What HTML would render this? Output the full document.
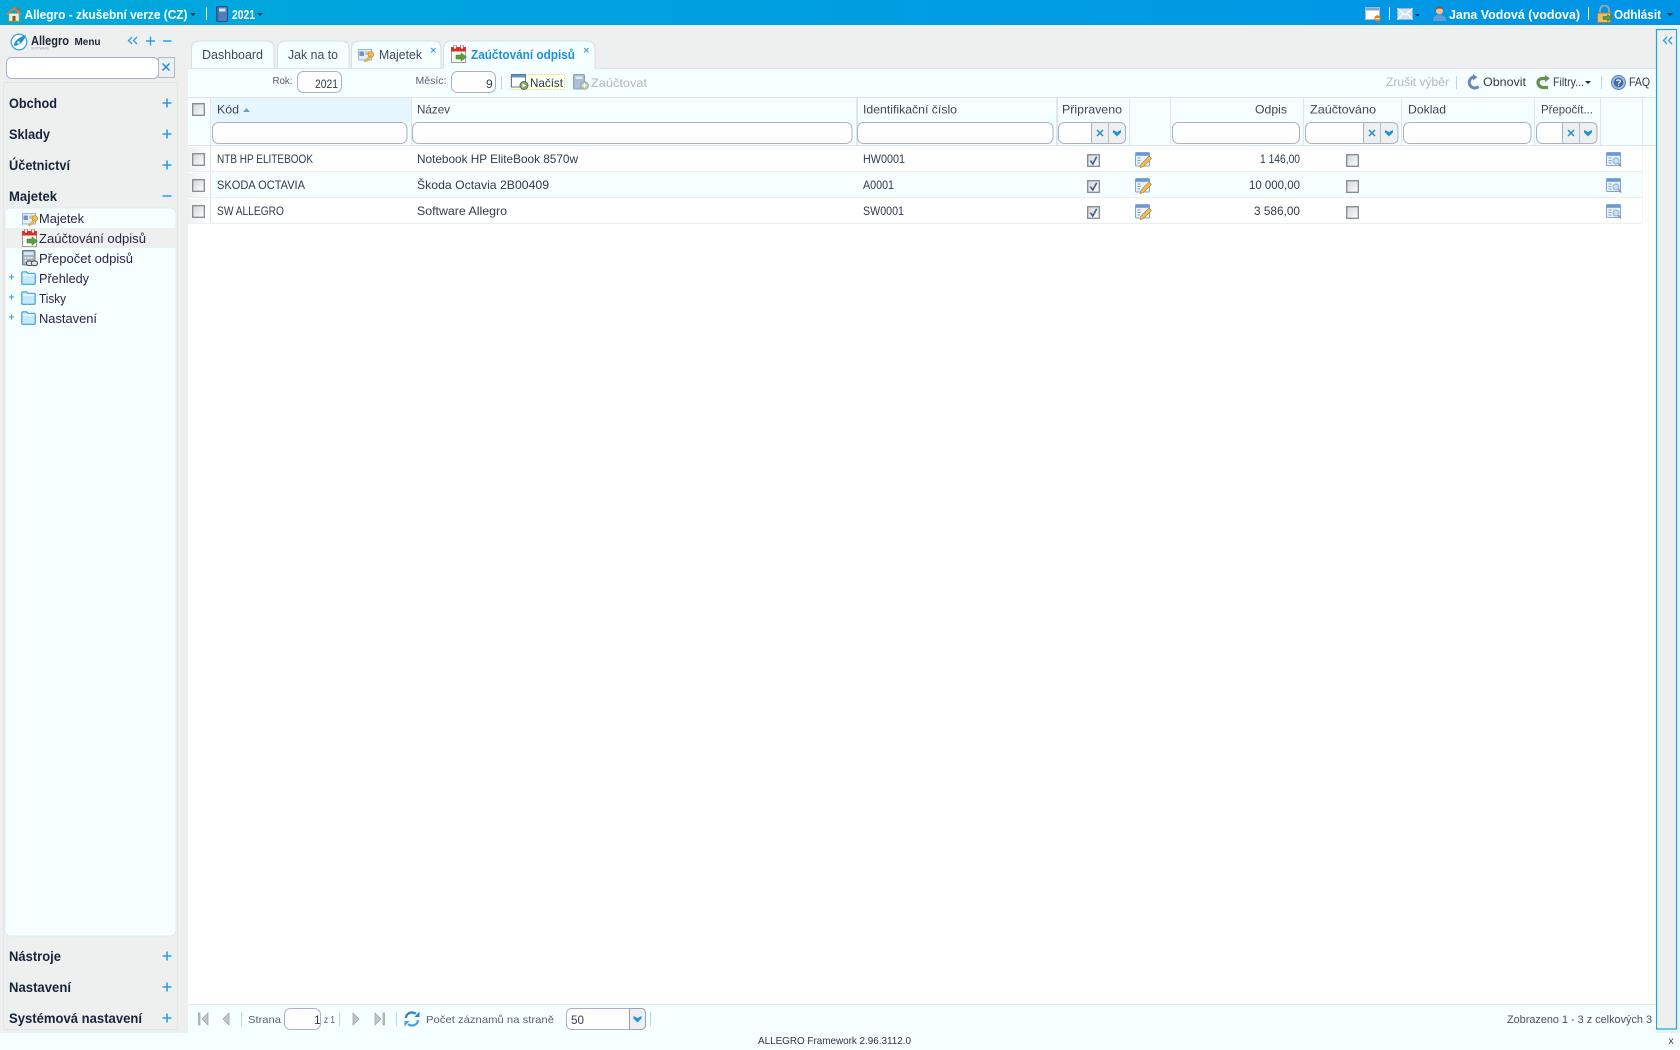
<!DOCTYPE html>
<html lang="cs"><head><meta charset="utf-8"><title>Allegro – Zaúčtování odpisů</title>
<style>
html,body{margin:0;padding:0;width:1680px;height:1050px;overflow:hidden;background:#f6ffff}
svg{display:block}
text{font-family:"Liberation Sans","DejaVu Sans",sans-serif;font-size:12px;fill:#33384a;white-space:pre}
.top{font-size:13px;font-weight:700;fill:#fff}
.sec{font-size:13.5px;font-weight:700;fill:#17233a}
.mi{font-size:12.5px;fill:#2b2348}
.tab{font-size:12.5px;fill:#3d4a5c}
.cell{font-size:12px;fill:#33384a}
.hd{font-size:12px;fill:#3f4656}
.sm{font-size:10.5px;fill:#5a5f70}
.off{font-size:11.5px;fill:#b4b7bd}
.c{shape-rendering:crispEdges}
.in{fill:#fff;stroke:#aab1c6;stroke-width:1}
.blue{stroke:#2f9be6;stroke-width:1.6;fill:none}
</style></head><body>
<svg width="1680" height="1050" viewBox="0 0 1680 1050" xmlns="http://www.w3.org/2000/svg">
<defs>
<linearGradient id="bar" x1="0" x2="1" y1="0" y2="0"><stop offset="0" stop-color="#00a9dc"/><stop offset="1" stop-color="#0094e6"/></linearGradient>
<linearGradient id="lc" x1="0" x2="1" y1="0" y2="0"><stop offset="0" stop-color="#eef0f0"/><stop offset="1" stop-color="#fdfefe"/></linearGradient>
<linearGradient id="cb" x1="0" x2="1" y1="0" y2="1"><stop offset="0" stop-color="#d2d4d6"/><stop offset="1" stop-color="#fff"/></linearGradient>
<symbol id="cbox" viewBox="0 0 13 13"><rect x=".7" y=".7" width="11.6" height="11.6" fill="url(#cb)" stroke="#85888c" stroke-width="1.3"/></symbol>
<symbol id="cbok" viewBox="0 0 13 13"><rect x=".7" y=".7" width="11.6" height="11.6" fill="url(#cb)" stroke="#85888c" stroke-width="1.3"/><path d="M3.400 6.600 5.800 10 9.700 2.800" fill="none" stroke="#3e5c94" stroke-width="1.600"/></symbol>
<symbol id="home" viewBox="0 0 16 16"><path d="M0 14.500h16V16H0z" fill="#5da03c"/><path d="M3 7.500h10V15H3z" fill="#f6e9d2" stroke="#c3a77c" stroke-width=".6"/><path d="M6.500 10h3v5h-3z" fill="#7a5a38"/><path d="M0 8.200 8 .8l8 7.400-1.200 1.200L8 3.400 1.200 9.400z" fill="#dc7a3c"/><path d="M11.200 1.500h2v3.800l-2-1.800z" fill="#b5612d"/></symbol>
<symbol id="book" viewBox="0 0 12 16"><rect x=".5" y=".5" width="11" height="15" rx="1" fill="#4d7fbd" stroke="#27528c"/><rect x="3" y="2.500" width="6.500" height="3" fill="#d8e8f6"/><rect x="1.500" y="1" width="1" height="14" fill="#2a5996"/></symbol>
<symbol id="win" viewBox="0 0 16 16"><rect x=".5" y="1.500" width="14" height="12" fill="#fff" stroke="#a9bdd2"/><rect x="1" y="2" width="13" height="2.500" fill="#7da7d4"/><circle cx="12.500" cy="12.500" r="3.200" fill="#e07b2e"/><rect x="10.500" y="12" width="4" height="1.200" fill="#fff"/></symbol>
<symbol id="mail" viewBox="0 0 16 12"><rect x=".5" y=".5" width="15" height="11" fill="#cfe4f8" stroke="#8fb6de"/><path d="M.5 .5 8 7l7.500-6.500M.5 11.500 6 5.500M15.500 11.500 10 5.500" fill="none" stroke="#fff" stroke-width="1"/></symbol>
<symbol id="user" viewBox="0 0 16 16"><path d="M1 16c0-5 3-6.500 7-6.500s7 1.500 7 6.500z" fill="#5f9dd8"/><circle cx="8" cy="5" r="3.800" fill="#f0c09a"/><path d="M4 5c-.4-3 1.500-4.500 4-4.500S12.400 2 12 5c-1-2-2-2.300-4-2.300S5 3 4 5z" fill="#96502c"/></symbol>
<symbol id="lock" viewBox="0 0 16 18"><path d="M3.500 8V5a4.500 4.500 0 0 1 9 0v3" fill="none" stroke="#a5a5a5" stroke-width="1.800"/><rect x="1" y="8" width="13" height="9.500" rx="1" fill="#e9bf62" stroke="#a87f2e"/><path d="M6.500 11.500h4.500v-2l4.500 3.500-4.500 3.500v-2H6.500z" fill="#5e9a44" stroke="#3f7530" stroke-width=".5"/></symbol>
<symbol id="maj" viewBox="0 0 16 13"><rect x=".5" y=".5" width="13" height="10.500" fill="#e4edf7" stroke="#9ab4d2"/><rect x="1.500" y="2.500" width="4.500" height="4.500" fill="#6f94c4"/><rect x="7" y="2.500" width="5.500" height="3.500" fill="#d8c49a"/><circle cx="12.800" cy="5.500" r="2.800" fill="#f2bd45" stroke="#b5842a" stroke-width=".6"/><path d="M11.300 7.300 6 12.300l1.600.5 1-1 .9.300 3.300-3.800z" fill="#f2bd45" stroke="#b5842a" stroke-width=".5"/></symbol>
<symbol id="cal" viewBox="0 0 16 18"><rect x=".5" y="2.500" width="14" height="15" fill="#fbfbf6" stroke="#9a9ea4"/><rect x="0" y="2" width="15" height="4.500" fill="#d9302a"/><rect x="2.500" y="0" width="3" height="4" rx="1" fill="#f2f2f2" stroke="#8d1e1a" stroke-width=".5"/><rect x="9.500" y="0" width="3" height="4" rx="1" fill="#f2f2f2" stroke="#8d1e1a" stroke-width=".5"/><path d="M5 10h5V7.800l5.500 4.200-5.500 4.200V14H5z" fill="#5da044" stroke="#3c7a2a" stroke-width=".5"/></symbol>
<symbol id="calc" viewBox="0 0 16 16"><rect x=".5" y=".5" width="12.500" height="14.500" rx="1" fill="#aab4c0" stroke="#6c7783"/><rect x="2" y="2" width="9.500" height="3" fill="#cfe4f4"/><path d="M2.500 7h2v1.500h-2zM5.500 7h2v1.500h-2zM8.500 7h2v1.500h-2zM2.500 10h2v1.500h-2z" fill="#eef2f5"/><rect x="4.500" y="11" width="6" height="4.500" rx="2.200" fill="#e4e7ea" stroke="#3f4650"/><rect x="9.500" y="11" width="6" height="4.500" rx="2.200" fill="#e4e7ea" stroke="#3f4650"/></symbol>
<symbol id="fold" viewBox="0 0 15 14"><path d="M.8 12.200V2c0-.7.4-1.200 1.200-1.200h3.600L7 2.300h5.800c.9 0 1.400.5 1.400 1.300v8.600c0 .7-.5 1.100-1.300 1.100H2c-.8 0-1.200-.4-1.200-1.100z" fill="#c6e8fb" stroke="#3ea2dc" stroke-width="1.200"/><rect x="1.500" y="3.300" width="12" height="1.500" fill="#eefaff"/></symbol>
<symbol id="edit" viewBox="0 0 17 16"><rect x=".5" y=".5" width="14" height="13.500" rx="1" fill="#eaf2fb" stroke="#7ea6d6"/><rect x="1" y="1" width="13" height="2.800" fill="#6b9ad3"/><path d="M2.500 6h3M2.500 8.500h3M2.500 11h2.500" stroke="#7da2cf"/><path d="M14 4 16.500 6.500 8.500 14.500l-3.400 1 .9-3.400z" fill="#f4bb4c" stroke="#b0802a" stroke-width=".6"/></symbol>
<symbol id="view" viewBox="0 0 16 16"><rect x=".5" y=".5" width="14" height="13" rx="1" fill="#eaf2fb" stroke="#7ea6d6"/><rect x="1" y="1" width="13" height="2.800" fill="#6b9ad3"/><path d="M2.500 6h3M2.500 8.500h3M2.500 11h3" stroke="#7da2cf"/><circle cx="10" cy="9" r="3" fill="#c8dff3" stroke="#8eb0d6"/><path d="M12.500 11.500 15 14.500" stroke="#bd8a55" stroke-width="1.500"/></symbol>
<symbol id="load" viewBox="0 0 18 16"><rect x=".5" y=".5" width="14" height="12.500" fill="#fff" stroke="#5578ad"/><rect x="1" y="1" width="13" height="2.500" fill="#6a90c4"/><circle cx="13" cy="11.500" r="4" fill="#8ea37a" stroke="#58703f"/><path d="M11.500 9.500 15 11.500 11.500 13.500z" fill="#fff"/></symbol>
<symbol id="post" viewBox="0 0 16 16"><rect x=".5" y=".5" width="11" height="14.500" rx="1" fill="#a9bfd8" stroke="#8aa3c0"/><rect x="2.500" y="2.500" width="7" height="2.500" fill="#e2ebf3"/><circle cx="11.500" cy="11.500" r="3.800" fill="#c3cfb8" stroke="#98a68b"/><path d="M9.500 11.500h4M11.500 9.500v4" stroke="#fff"/></symbol>
<symbol id="ref" viewBox="0 0 13 16"><path d="M11.500 12.500A5.500 5.500 0 1 1 7 3" fill="none" stroke="#6c88b6" stroke-width="3"/><path d="M6 0v6.500l4.500-3.200z" fill="#6c88b6"/></symbol>
<symbol id="filt" viewBox="0 0 16 15"><path d="M13 12.500H8.500C5 12.500 3 10 3 7.500S5 3.500 8 3.500h2" fill="none" stroke="#63904d" stroke-width="3.200"/><path d="M10 0v7l5-3.500z" fill="#63904d"/></symbol>
<symbol id="faq" viewBox="0 0 15 15"><circle cx="7.500" cy="7.500" r="7" fill="#a5bddf" stroke="#5b7eb2"/><circle cx="7.500" cy="7.500" r="4.800" fill="#3d6cae"/><path d="M5.600 6c.2-1.500 3.800-1.500 3.800.3 0 1.200-1.900 1.200-1.900 2.500" fill="none" stroke="#fff" stroke-width="1.200"/><rect x="6.900" y="9.700" width="1.200" height="1.200" fill="#fff"/></symbol>
<symbol id="sync" viewBox="0 0 16 18"><path d="M2 8c0-3.500 3-5.500 6-5.500 1.500 0 2.800.4 3.800 1.500" fill="none" stroke="#2e7fc8" stroke-width="2.200"/><path d="M10.500 7h5V1.500z" fill="#2e7fc8"/><path d="M14 10c0 3.500-3 5.500-6 5.500-1.500 0-2.800-.4-3.800-1.500" fill="none" stroke="#4aa0dc" stroke-width="2.200"/><path d="M5.500 11h-5v5.500z" fill="#4aa0dc"/></symbol>
</defs>

<!-- page backgrounds -->
<rect width="1680" height="1050" fill="#f6ffff"/>
<rect width="1680" height="1033" y="0" fill="#eef0f0"/>
<rect x="188" y="68" width="1468" height="982" fill="#fff"/>
<rect x="0" y="1033" width="188" height="17" fill="#f6ffff"/>
<rect x="1656" y="1033" width="24" height="17" fill="#f6ffff"/>

<!-- top bar -->
<rect width="1680" height="25" fill="url(#bar)"/>
<use href="#home" x="6" y="6" width="16" height="16"/>
<text class="top" x="24.500" y="19" textLength="163" lengthAdjust="spacingAndGlyphs">Allegro - zkušební verze (CZ)</text>
<path d="M190 13h6l-3 3z" fill="#24384d"/>
<rect class="c" x="206" y="7" width="1" height="13" fill="#e6f6fd"/>
<use href="#book" x="216" y="6" width="12" height="16"/>
<text class="top" x="232" y="19" textLength="23" lengthAdjust="spacingAndGlyphs">2021</text>
<path d="M257 13h6l-3 3z" fill="#24384d"/>
<use href="#win" x="1365" y="6" width="16" height="16"/>
<rect class="c" x="1389" y="7" width="1" height="13" fill="#e6f6fd"/>
<use href="#mail" x="1397" y="8" width="16" height="12"/>
<path d="M1415 14h5l-2.500 2.500z" fill="#24384d"/>
<use href="#user" x="1432" y="6" width="15" height="15"/>
<text class="top" x="1449" y="19" textLength="131" lengthAdjust="spacingAndGlyphs">Jana Vodová (vodova)</text>
<rect class="c" x="1588" y="7" width="1" height="13" fill="#e6f6fd"/>
<use href="#lock" x="1596" y="5" width="17" height="18"/>
<text class="top" x="1614" y="19" textLength="47" lengthAdjust="spacingAndGlyphs">Odhlásit</text>
<path d="M1667 13h6l-3 3z" fill="#24384d"/>

<!-- sidebar head -->
<circle cx="19" cy="42" r="7.800" fill="#fff" stroke="#3ba6dd" stroke-width="1.300"/>
<path d="M13.500 46c.5-4 4-8.500 12.500-11-2 6-5.500 10.500-12.500 11z" fill="#1f93d6"/>
<circle cx="18.500" cy="42.500" r="1.300" fill="#fff"/>
<text x="31" y="45" style="font-size:13px;font-weight:700;fill:#1b2536" textLength="38" lengthAdjust="spacingAndGlyphs">Allegro</text>
<text x="74.500" y="45" style="font-size:10px;font-weight:700;fill:#1b2536" textLength="26" lengthAdjust="spacingAndGlyphs">Menu</text>
<text x="31" y="49.500" style="font-size:3.500px;fill:#a0a6ad" textLength="18" lengthAdjust="spacingAndGlyphs">SOFTWARE</text>
<path d="M132 37l-3.500 3.500 3.500 3.500M137 37l-3.500 3.500 3.500 3.500" class="blue" style="stroke-width:1.300"/>
<path d="M146 41h9M150.500 36.500v9M163 41h8.500" class="blue" style="stroke-width:1.400"/>
<rect class="in" x="6.500" y="57.500" width="152" height="21" rx="5"/>
<rect x="158.500" y="57.500" width="16" height="20" fill="#eef0f0" stroke="#b2b8c4"/>
<path d="M162.500 63.500l7 7M169.500 63.500l-7 7" stroke="#1f8ed8" stroke-width="1.500"/>

<!-- sidebar sections -->
<rect class="c" x="3" y="82" width="175" height="1" fill="#e2e5e5"/>
<rect class="c" x="3" y="82" width="1" height="948" fill="#e4e7e7"/>
<rect class="c" x="177" y="82" width="1" height="948" fill="#e4e7e7"/>
<rect class="c" x="3" y="1029" width="175" height="1" fill="#e2e5e5"/>
<text class="sec" x="9" y="108" textLength="48" lengthAdjust="spacingAndGlyphs">Obchod</text>
<text class="sec" x="9" y="139" textLength="41" lengthAdjust="spacingAndGlyphs">Sklady</text>
<text class="sec" x="9" y="170" textLength="61" lengthAdjust="spacingAndGlyphs">Účetnictví</text>
<text class="sec" x="9" y="201" textLength="48" lengthAdjust="spacingAndGlyphs">Majetek</text>
<path d="M162.500 103h9M167 98.500v9M162.500 134h9M167 129.500v9M162.500 165h9M167 160.500v9M162.500 196h9" class="blue"/>
<rect x="5" y="208" width="171" height="728" rx="6" fill="#f6ffff" stroke="#e6eaea"/>
<rect class="c" x="5" y="228" width="171" height="20" fill="#eef0f0"/>
<use href="#maj" x="22" y="213" width="16" height="13"/>
<text class="mi" x="39" y="223" textLength="45" lengthAdjust="spacingAndGlyphs">Majetek</text>
<use href="#cal" x="22" y="229" width="16" height="18"/>
<text class="mi" x="39" y="243" textLength="107" lengthAdjust="spacingAndGlyphs">Zaúčtování odpisů</text>
<use href="#calc" x="22" y="250" width="16" height="16"/>
<text class="mi" x="39" y="263" textLength="94" lengthAdjust="spacingAndGlyphs">Přepočet odpisů</text>
<use href="#fold" x="21" y="271" width="15" height="14"/>
<text class="mi" x="39" y="283" textLength="50" lengthAdjust="spacingAndGlyphs">Přehledy</text>
<use href="#fold" x="21" y="291" width="15" height="14"/>
<text class="mi" x="39" y="303" textLength="27" lengthAdjust="spacingAndGlyphs">Tisky</text>
<use href="#fold" x="21" y="311" width="15" height="14"/>
<text class="mi" x="39" y="323" textLength="58" lengthAdjust="spacingAndGlyphs">Nastavení</text>
<path d="M9 277h5M11.500 274.500v5M9 297h5M11.500 294.500v5M9 317h5M11.500 314.500v5" stroke="#2f9be6" stroke-width="1"/>
<text class="sec" x="9" y="961" textLength="52" lengthAdjust="spacingAndGlyphs">Nástroje</text>
<text class="sec" x="9" y="992" textLength="62" lengthAdjust="spacingAndGlyphs">Nastavení</text>
<text class="sec" x="9" y="1023" textLength="133" lengthAdjust="spacingAndGlyphs">Systémová nastavení</text>
<path d="M162.500 956h9M167 951.500v9M162.500 987h9M167 982.500v9M162.500 1018h9M167 1013.500v9" class="blue"/>

<!-- tabs -->
<g fill="#f6ffff" stroke="#d6dee8">
<path d="M191.500 68V49q0-8 8-8h67q7.500 0 7.500 8v19"/>
<path d="M277.500 68V49q0-8 8-8h56q7.500 0 7.500 8v19"/>
<path d="M351.500 68V49q0-8 8-8h74q7.500 0 7.500 8v19"/>
<path d="M443.500 69V49q0-8 8-8h136q7.500 0 7.500 8v20"/>
</g>
<text class="tab" x="202" y="59" textLength="61" lengthAdjust="spacingAndGlyphs">Dashboard</text>
<text class="tab" x="288" y="59" textLength="50" lengthAdjust="spacingAndGlyphs">Jak na to</text>
<use href="#maj" x="358" y="49" width="16" height="13"/>
<text class="tab" x="379" y="59" textLength="43" lengthAdjust="spacingAndGlyphs">Majetek</text>
<path d="M431 48l4.500 4.500M435.500 48 431 52.500" stroke="#2f9be6" stroke-width="1"/>
<use href="#cal" x="451" y="45" width="16" height="18"/>
<text x="471" y="59" style="font-size:12.500px;font-weight:700;fill:#1f8ed8" textLength="104" lengthAdjust="spacingAndGlyphs">Zaúčtování odpisů</text>
<path d="M584 48l4.500 4.500M588.500 48 584 52.500" stroke="#2f9be6" stroke-width="1"/>

<!-- toolbar -->
<rect class="c" x="188" y="68" width="1468" height="29" fill="#f6ffff"/>
<rect class="c" x="188" y="68" width="255" height="1" fill="#dfe4ec"/>
<rect class="c" x="595" y="68" width="1061" height="1" fill="#dfe4ec"/>
<rect class="c" x="188" y="97" width="1468" height="1" fill="#dde3e6"/>
<text class="sm" x="272.500" y="84" textLength="20" lengthAdjust="spacingAndGlyphs">Rok:</text>
<rect class="in" x="297.500" y="71.500" width="44" height="21" rx="6"/>
<text class="cell" x="315" y="88" textLength="23" lengthAdjust="spacingAndGlyphs">2021</text>
<text class="sm" x="415.500" y="84" textLength="31" lengthAdjust="spacingAndGlyphs">Měsíc:</text>
<rect class="in" x="451.500" y="71.500" width="44" height="21" rx="6"/>
<text class="cell" x="486" y="88">9</text>
<rect class="c" x="501" y="76" width="1" height="13" fill="#b9d9ec"/>
<rect x="510.500" y="74.500" width="54" height="15" fill="#fffff2" stroke="#eadf50" stroke-dasharray="1.500 1.500"/>
<use href="#load" x="511" y="74" width="18" height="16"/>
<text x="530" y="87" style="font-size:12px;fill:#2a3346" textLength="33" lengthAdjust="spacingAndGlyphs">Načíst</text>
<use href="#post" x="573" y="74" width="16" height="16"/>
<text class="off" x="591" y="87" textLength="56" lengthAdjust="spacingAndGlyphs">Zaúčtovat</text>
<text class="off" x="1386" y="86" textLength="63" lengthAdjust="spacingAndGlyphs">Zrušit výběr</text>
<rect class="c" x="1456" y="76" width="1" height="13" fill="#b9d9ec"/>
<use href="#ref" x="1467" y="74" width="13" height="16"/>
<text class="cell" x="1483" y="86" textLength="43" lengthAdjust="spacingAndGlyphs">Obnovit</text>
<use href="#filt" x="1535" y="75" width="16" height="15"/>
<text class="cell" x="1553" y="86" textLength="31" lengthAdjust="spacingAndGlyphs">Filtry...</text>
<path d="M1585 81h6l-3 3z" fill="#1c2a3c"/>
<rect class="c" x="1601" y="76" width="1" height="13" fill="#b9d9ec"/>
<use href="#faq" x="1611" y="75" width="15" height="15"/>
<text class="cell" x="1629" y="86" textLength="21" lengthAdjust="spacingAndGlyphs">FAQ</text>

<!-- grid header -->
<rect class="c" x="188" y="98" width="1468" height="47" fill="#f6ffff"/>
<rect class="c" x="211" y="98" width="200" height="24" fill="#e6f6fe"/>
<rect class="c" x="188" y="145" width="1468" height="1" fill="#dde3ea"/>
<g class="c" fill="#dfe6ec">
<rect x="210" y="98" width="1" height="47"/><rect x="411" y="98" width="1" height="47"/><rect x="856" y="98" width="2" height="47"/><rect x="1056" y="98" width="2" height="47"/><rect x="1129" y="98" width="1" height="47"/><rect x="1170" y="98" width="1" height="47"/><rect x="1303" y="98" width="1" height="47"/><rect x="1401" y="98" width="1" height="47"/><rect x="1534" y="98" width="1" height="47"/><rect x="1600" y="98" width="1" height="47"/><rect x="1642" y="98" width="1" height="47"/>
</g>
<use href="#cbox" x="192" y="103" width="13" height="13"/>
<text class="hd" x="217" y="113.500" textLength="22" lengthAdjust="spacingAndGlyphs">Kód</text>
<path d="M243 112l3.500-4 3.500 4z" fill="#6f9fd0"/>
<text class="hd" x="417" y="113.500" textLength="33" lengthAdjust="spacingAndGlyphs">Název</text>
<text class="hd" x="863" y="113.500" textLength="94" lengthAdjust="spacingAndGlyphs">Identifikační číslo</text>
<text class="hd" x="1062" y="113.500" textLength="60" lengthAdjust="spacingAndGlyphs">Připraveno</text>
<text class="hd" x="1255" y="113.500" textLength="32" lengthAdjust="spacingAndGlyphs">Odpis</text>
<text class="hd" x="1310" y="113.500" textLength="66" lengthAdjust="spacingAndGlyphs">Zaúčtováno</text>
<text class="hd" x="1408" y="113.500" textLength="38" lengthAdjust="spacingAndGlyphs">Doklad</text>
<text class="hd" x="1541" y="113.500" textLength="52" lengthAdjust="spacingAndGlyphs">Přepočít...</text>
<rect class="in" x="212.500" y="122.500" width="194.500" height="21" rx="6"/>
<rect class="in" x="412.500" y="122.500" width="439.500" height="21" rx="6"/>
<rect class="in" x="857.500" y="122.500" width="195.500" height="21" rx="6"/>
<rect class="in" x="1172.500" y="122.500" width="127" height="21" rx="6"/>
<rect class="in" x="1403.500" y="122.500" width="127.500" height="21" rx="6"/>
<!-- combos -->
<g>
<rect class="in" x="1058.500" y="122.500" width="67" height="21" rx="6"/>
<path d="M1091.500 122.500h28q6 0 6 6v9q0 6-6 6h-28z" fill="#eef0f0" stroke="#aab1c6"/>
<path d="M1108.500 122.500v21" stroke="#b8bec8"/>
<path d="M1097 130l6 6M1103 130l-6 6" stroke="#1f8ed8" stroke-width="1.500"/>
<path d="M1113 130l4 2 4-2v2.500l-4 4-4-4z" fill="#1f96dc"/>
<rect class="in" x="1305.500" y="122.500" width="92.500" height="21" rx="6"/>
<path d="M1363.500 122.500h28.500q6 0 6 6v9q0 6-6 6h-28.500z" fill="#eef0f0" stroke="#aab1c6"/>
<path d="M1380.500 122.500v21" stroke="#b8bec8"/>
<path d="M1369 130l6 6M1375 130l-6 6" stroke="#1f8ed8" stroke-width="1.500"/>
<path d="M1385 130l4 2 4-2v2.500l-4 4-4-4z" fill="#1f96dc"/>
<rect class="in" x="1536.500" y="122.500" width="60.500" height="21" rx="6"/>
<path d="M1562.500 122.500h28.500q6 0 6 6v9q0 6-6 6h-28.500z" fill="#eef0f0" stroke="#aab1c6"/>
<path d="M1579.500 122.500v21" stroke="#b8bec8"/>
<path d="M1568 130l6 6M1574 130l-6 6" stroke="#1f8ed8" stroke-width="1.500"/>
<path d="M1584 130l4 2 4-2v2.500l-4 4-4-4z" fill="#1f96dc"/>
</g>

<!-- rows -->
<rect class="c" x="188" y="172" width="1454" height="25" fill="#f6ffff"/>
<rect class="c" x="188" y="147" width="22" height="24" fill="url(#lc)"/>
<rect class="c" x="188" y="173" width="22" height="24" fill="url(#lc)"/>
<rect class="c" x="188" y="199" width="22" height="24" fill="url(#lc)"/>
<rect class="c" x="210" y="146" width="1" height="77" fill="#dfe3e6"/>
<rect class="c" x="188" y="171" width="1454" height="1" fill="#e8f0f0"/>
<rect class="c" x="188" y="197" width="1454" height="1" fill="#e8f0f0"/>
<rect class="c" x="188" y="223" width="1454" height="1" fill="#e8f0f0"/>
<rect class="c" x="1642" y="146" width="1" height="77" fill="#eef3f3"/>
<use href="#cbox" x="192" y="153" width="13" height="13"/>
<use href="#cbox" x="192" y="179" width="13" height="13"/>
<use href="#cbox" x="192" y="205" width="13" height="13"/>
<text class="cell" x="217" y="163" textLength="96" lengthAdjust="spacingAndGlyphs">NTB HP ELITEBOOK</text>
<text class="cell" x="217" y="189" textLength="88" lengthAdjust="spacingAndGlyphs">SKODA OCTAVIA</text>
<text class="cell" x="217" y="215" textLength="67" lengthAdjust="spacingAndGlyphs">SW ALLEGRO</text>
<text class="cell" x="417" y="163" textLength="161" lengthAdjust="spacingAndGlyphs">Notebook HP EliteBook 8570w</text>
<text class="cell" x="417" y="189" textLength="132" lengthAdjust="spacingAndGlyphs">Škoda Octavia 2B00409</text>
<text class="cell" x="417" y="215" textLength="90" lengthAdjust="spacingAndGlyphs">Software Allegro</text>
<text class="cell" x="863" y="163" textLength="42" lengthAdjust="spacingAndGlyphs">HW0001</text>
<text class="cell" x="863" y="189" textLength="31" lengthAdjust="spacingAndGlyphs">A0001</text>
<text class="cell" x="863" y="215" textLength="41" lengthAdjust="spacingAndGlyphs">SW0001</text>
<use href="#cbok" x="1087" y="154" width="13" height="13"/>
<use href="#cbok" x="1087" y="180" width="13" height="13"/>
<use href="#cbok" x="1087" y="206" width="13" height="13"/>
<use href="#edit" x="1135" y="152" width="17" height="16"/>
<use href="#edit" x="1135" y="178" width="17" height="16"/>
<use href="#edit" x="1135" y="204" width="17" height="16"/>
<text class="cell" x="1260" y="163" textLength="40" lengthAdjust="spacingAndGlyphs">1 146,00</text>
<text class="cell" x="1249" y="189" textLength="51" lengthAdjust="spacingAndGlyphs">10 000,00</text>
<text class="cell" x="1254" y="215" textLength="46" lengthAdjust="spacingAndGlyphs">3 586,00</text>
<use href="#cbox" x="1346" y="154" width="13" height="13"/>
<use href="#cbox" x="1346" y="180" width="13" height="13"/>
<use href="#cbox" x="1346" y="206" width="13" height="13"/>
<use href="#view" x="1606" y="152" width="16" height="16"/>
<use href="#view" x="1606" y="178" width="16" height="16"/>
<use href="#view" x="1606" y="204" width="16" height="16"/>

<!-- right collapsed panel -->
<rect x="1656.500" y="29.500" width="20" height="999.500" fill="#eef0f0" stroke="#18abd8" stroke-width="1.200"/>
<path d="M1667 37l-3.500 3.500 3.500 3.500M1672 37l-3.500 3.500 3.500 3.500" class="blue" style="stroke-width:1.300"/>

<!-- pager -->
<rect class="c" x="188" y="1004" width="1468" height="46" fill="#f6ffff"/>
<rect class="c" x="188" y="1004" width="1468" height="1" fill="#dfe8e8"/>
<g fill="#c3c6ca" stroke="#9a9da1" stroke-width=".7">
<path d="M198.500 1013v12h1.500v-12zM208 1013l-6 6 6 6z"/>
<path d="M229 1013l-6 6 6 6z"/>
<path d="M353 1013l6 6-6 6z"/>
<path d="M375 1013l6 6-6 6zM383 1013v12h1.500v-12z"/>
</g>
<rect class="c" x="241" y="1012" width="1" height="14" fill="#b9d9ec"/>
<text class="sm" x="248" y="1023" textLength="33" lengthAdjust="spacingAndGlyphs">Strana</text>
<rect class="in" x="284.500" y="1008.500" width="36" height="21" rx="6"/>
<text class="cell" x="314" y="1024">1</text>
<text class="sm" x="324" y="1023" textLength="11" lengthAdjust="spacingAndGlyphs">z 1</text>
<rect class="c" x="339" y="1012" width="1" height="14" fill="#b9d9ec"/>
<rect class="c" x="396" y="1012" width="1" height="14" fill="#b9d9ec"/>
<use href="#sync" x="404" y="1010" width="16" height="18"/>
<text class="sm" x="426" y="1023" textLength="128" lengthAdjust="spacingAndGlyphs">Počet záznamů na straně</text>
<rect class="in" x="566.500" y="1008.500" width="79" height="21" rx="5"/>
<path d="M629.500 1008.500h11q5 0 5 5v11q0 5-5 5h-11z" fill="#eef0f0" stroke="#9aa1b0"/>
<path d="M633.500 1016l4 2 4-2v2.500l-4 4-4-4z" fill="#1f96dc"/>
<text x="571" y="1024" style="font-size:12px;fill:#3a3f4e" textLength="13" lengthAdjust="spacingAndGlyphs">50</text>
<rect class="c" x="650" y="1012" width="1" height="14" fill="#b9d9ec"/>
<text class="sm" x="1507" y="1023" textLength="145" lengthAdjust="spacingAndGlyphs" style="fill:#4a5060;font-size:11px">Zobrazeno 1 - 3 z celkových 3</text>

<!-- footer -->
<text x="758" y="1044" style="font-size:10.500px;fill:#2e3444" textLength="153" lengthAdjust="spacingAndGlyphs">ALLEGRO Framework 2.96.3112.0</text>
<text x="1668.500" y="1044" style="font-size:10.500px;fill:#444">x</text>
</svg>
</body></html>
